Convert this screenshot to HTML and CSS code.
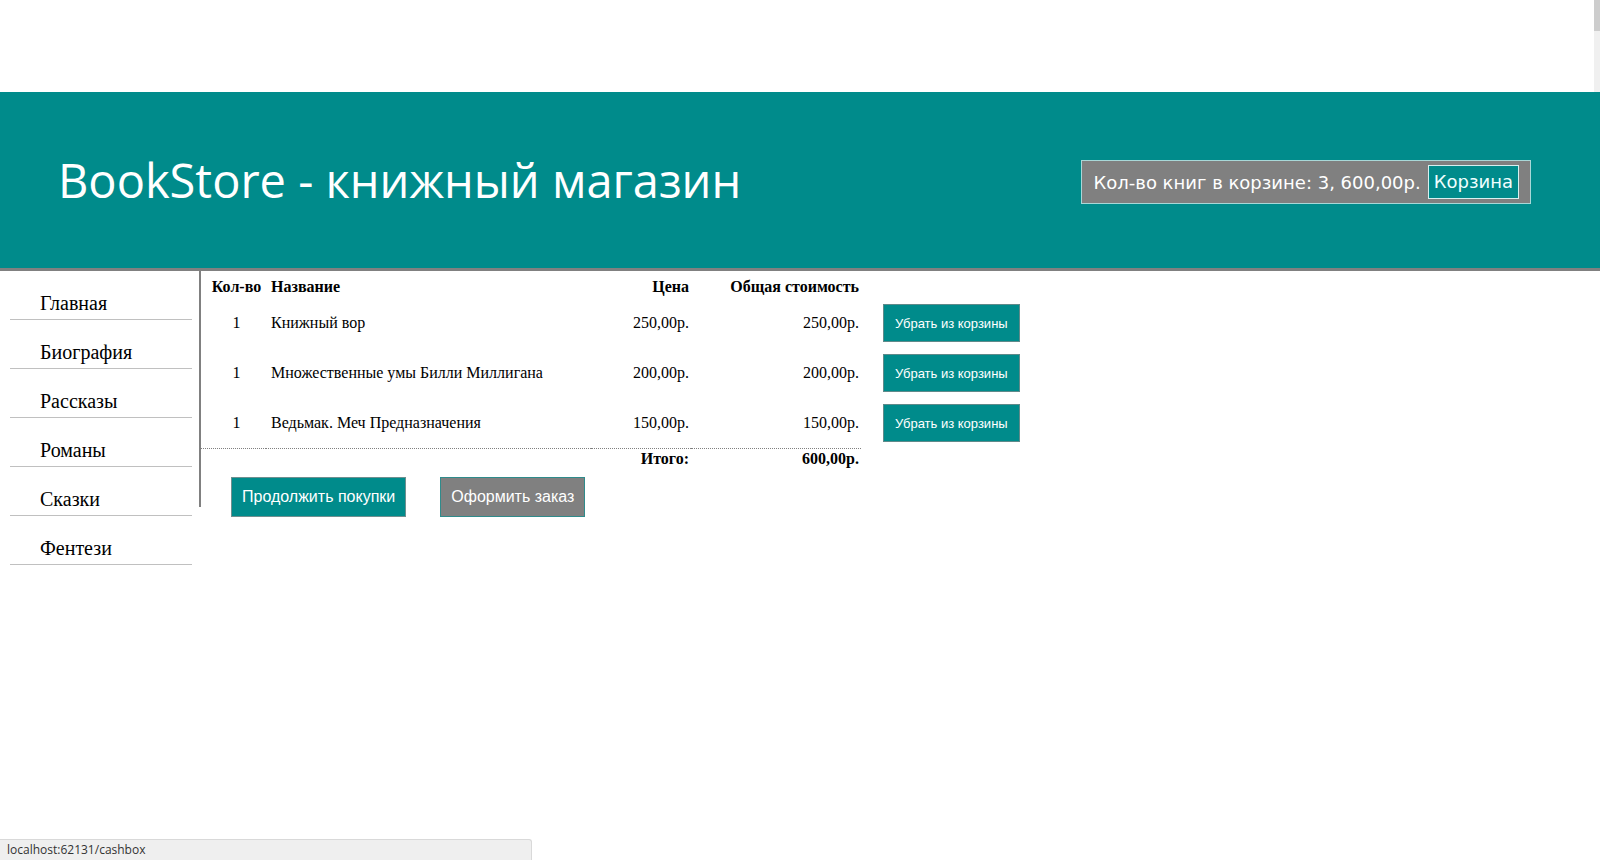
FILE: index.html
```html
<!DOCTYPE html>
<html lang="ru">
<head>
<meta charset="utf-8">
<title>BookStore - корзина</title>
<link rel="stylesheet" href="styles.css">
</head>
<body>
<div class="topspace"></div>
<header class="header">
  <h1 class="title">BookStore - книжный магазин</h1>
  <div class="cart-summary">
    <span class="cart-text">Кол-во книг в корзине: 3, 600,00р.</span>
    <a class="cart-link" href="#">Корзина</a>
  </div>
</header>
<div class="layout">
  <nav class="sidebar">
    <ul class="nav">
      <li class="nav-item">Главная</li>
      <li class="nav-item">Биография</li>
      <li class="nav-item">Рассказы</li>
      <li class="nav-item">Романы</li>
      <li class="nav-item">Сказки</li>
      <li class="nav-item">Фентези</li>
    </ul>
  </nav>
  <div class="divider"></div>
  <main class="content">
    <table class="cart-table">
      <thead>
        <tr>
          <th class="c-qty">Кол-во</th>
          <th class="c-name">Название</th>
          <th class="c-price">Цена</th>
          <th class="c-total">Общая стоимость</th>
          <th class="c-action"></th>
        </tr>
      </thead>
      <tbody>
        <tr>
          <td class="c-qty">1</td>
          <td class="c-name">Книжный вор</td>
          <td class="c-price">250,00р.</td>
          <td class="c-total">250,00р.</td>
          <td class="c-action"><button class="btn btn-remove">Убрать из корзины</button></td>
        </tr>
        <tr>
          <td class="c-qty">1</td>
          <td class="c-name">Множественные умы Билли Миллигана</td>
          <td class="c-price">200,00р.</td>
          <td class="c-total">200,00р.</td>
          <td class="c-action"><button class="btn btn-remove">Убрать из корзины</button></td>
        </tr>
        <tr>
          <td class="c-qty">1</td>
          <td class="c-name">Ведьмак. Меч Предназначения</td>
          <td class="c-price">150,00р.</td>
          <td class="c-total">150,00р.</td>
          <td class="c-action"><button class="btn btn-remove">Убрать из корзины</button></td>
        </tr>
      </tbody>
      <tfoot>
        <tr class="sum-row">
          <td class="sum-cell" colspan="2"></td>
          <td class="sum-cell c-price">Итого:</td>
          <td class="sum-cell c-total">600,00р.</td>
          <td class="sum-empty"></td>
        </tr>
      </tfoot>
    </table>
    <div class="actions">
      <button class="btn btn-main">Продолжить покупки</button>
      <button class="btn btn-order">Оформить заказ</button>
    </div>
  </main>
</div>
<div class="status">localhost:62131/cashbox</div>
<div class="scrollbar"><div class="scroll-thumb"></div></div>
</body>
</html>
```
FILE: styles.css
```css
html, body {
  margin: 0;
  padding: 0;
  background: #ffffff;
}

body {
  font-family: "Liberation Serif", "Times New Roman", serif;
  color: #000;
}

.topspace {
  height: 92px;
}

.header {
  height: 176px;
  background: #008b8b;
  border-bottom: 3px solid #808080;
  display: flex;
  align-items: center;
  justify-content: space-between;
  padding: 0 69px 0 58px;
}

.title {
  margin: 0;
  font-family: "Open Sans", "DejaVu Sans", sans-serif;
  font-weight: 400;
  font-size: 47px;
  color: #ffffff;
  line-height: 1;
}

.cart-summary {
  display: flex;
  align-items: center;
  gap: 7px;
  background: #808080;
  border: 1px solid #a8d8d8;
  padding: 4px 11px 4px 11px;
  height: 34px;
  font-family: "DejaVu Sans", Verdana, sans-serif;
  font-size: 18px;
  color: #ffffff;
  position: relative;
  top: 2px;
}

.cart-text {
  white-space: nowrap;
}

.cart-link {
  display: block;
  background: #008b8b;
  border: 1px solid #d8f0f0;
  color: #f0ffff;
  text-decoration: none;
  padding: 0 5px;
  height: 32px;
  line-height: 32px;
}

.layout {
  display: grid;
  grid-template-columns: 199px 2px 1fr;
  align-items: start;
}

.sidebar {
  width: 199px;
}

.divider {
  height: 236px;
  background: #808080;
}

.nav {
  list-style: none;
  margin: 0 0 0 10px;
  padding: 0;
  width: 182px;
}

.nav-item {
  font-size: 20px;
  line-height: 22px;
  padding: 21px 0 5px 30px;
  border-bottom: 1px solid #c0c0c0;
}

.cart-table {
  border-collapse: collapse;
  table-layout: fixed;
  width: 820px;
  font-size: 16px;
}

.cart-table th,
.cart-table td {
  box-sizing: border-box;
  line-height: 18px;
  white-space: nowrap;
}

.cart-table th {
  font-weight: bold;
  padding-top: 7px;
  padding-bottom: 2px;
}

.cart-table td {
  padding-top: 6px;
  padding-bottom: 6px;
  vertical-align: middle;
}

.c-qty {
  width: 65px;
  text-align: center;
  padding-left: 8px;
  padding-right: 2px;
}

.c-name {
  width: 325px;
  text-align: left;
  padding-left: 5px;
}

.c-price {
  width: 100px;
  text-align: right;
  padding-right: 2px;
}

.c-total {
  width: 170px;
  text-align: right;
  padding-right: 2px;
}

.c-action {
  width: 160px;
  padding-left: 22px;
}

.cart-table td.c-action {
  padding-left: 22px;
}

.cart-table td.sum-cell {
  border-top: 1px dotted #808080;
  font-weight: bold;
  padding-top: 1px;
  padding-bottom: 2px;
}

.cart-table td.sum-empty {
  padding: 0;
}

.btn {
  font-family: "Liberation Sans", Arial, sans-serif;
  color: #ffffff;
  border: 1px solid #5f8a8a;
  cursor: pointer;
  margin: 0;
}

.btn-remove {
  display: block;
  height: 38px;
  font-size: 13px;
  padding: 0 11px;
  background: #008b8b;
}

.actions {
  display: flex;
  gap: 34px;
  margin: 7px 0 0 30px;
}

.btn-main {
  height: 40px;
  font-size: 16px;
  padding: 0 10px;
  background: #008b8b;
  border-color: #6f8f8f;
}

.btn-order {
  height: 40px;
  font-size: 16px;
  padding: 0 10px;
  background: #808080;
  border-color: #2f8b8b;
}

.status {
  position: fixed;
  left: 0;
  bottom: 0;
  box-sizing: border-box;
  width: 532px;
  height: 21px;
  background: #efefef;
  border-top: 1px solid #d9d9d9;
  border-right: 1px solid #d9d9d9;
  border-top-right-radius: 3px;
  padding-left: 7px;
  font-family: "Open Sans", "DejaVu Sans", sans-serif;
  font-size: 12px;
  line-height: 19px;
  color: #333333;
}

.scrollbar {
  position: absolute;
  top: 0;
  right: 0;
  width: 6px;
  height: 92px;
  background: #f0f0f0;
}

.scroll-thumb {
  height: 31px;
  background: #cdcdcd;
}
```
